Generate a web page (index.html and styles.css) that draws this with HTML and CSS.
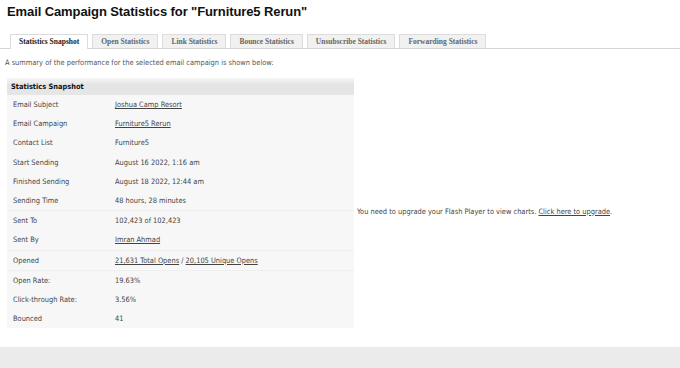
FILE: index.html
```html
<!DOCTYPE html>
<html lang="en">
<head>
  <meta charset="UTF-8" />
  <title>Email Campaign Statistics</title>
  <link rel="stylesheet" href="styles.css">
</head>
<body>
  <div class="page">
    <h1>Email Campaign Statistics for "Furniture5 Rerun"</h1>

    <ul class="tabs">
      <li class="active">Statistics Snapshot</li>
      <li>Open Statistics</li>
      <li>Link Statistics</li>
      <li>Bounce Statistics</li>
      <li>Unsubscribe Statistics</li>
      <li>Forwarding Statistics</li>
    </ul>

    <p class="intro">A summary of the performance for the selected email campaign is shown below:</p>

    <div class="content">
      <table class="snapshot">
        <tr><th colspan="2">Statistics Snapshot</th></tr>
        <tr><td class="label">Email Subject</td><td><a href="#">Joshua Camp Resort</a></td></tr>
        <tr><td class="label">Email Campaign</td><td><a href="#">Furniture5 Rerun</a></td></tr>
        <tr><td class="label">Contact List</td><td>Furniture5</td></tr>
        <tr><td class="label">Start Sending</td><td>August 16 2022, 1:16 am</td></tr>
        <tr><td class="label">Finished Sending</td><td>August 18 2022, 12:44 am</td></tr>
        <tr><td class="label">Sending Time</td><td>48 hours, 28 minutes</td></tr>
        <tr class="line"><td class="label">Sent To</td><td>102,423 of 102,423</td></tr>
        <tr><td class="label">Sent By</td><td><a href="#">Imran Ahmad</a></td></tr>
        <tr class="line"><td class="label">Opened</td><td><a href="#">21,631 Total Opens</a> / <a href="#">20,105 Unique Opens</a></td></tr>
        <tr class="line"><td class="label">Open Rate:</td><td>19.63%</td></tr>
        <tr><td class="label">Click-through Rate:</td><td>3.56%</td></tr>
        <tr><td class="label">Bounced</td><td>41</td></tr>
      </table>

      <div class="chart">
        You need to upgrade your Flash Player to view charts. <a href="#">Click here to upgrade</a>.
      </div>
    </div>
  </div>

  <div class="footer"></div>
</body>
</html>
```

FILE: styles.css
```css
body {
  margin: 0;
  font-family: Tahoma, "DejaVu Sans Condensed", "Liberation Sans", sans-serif;
  font-size: 7.4px;
  color: #444;
  background: #fff;
}

.page {
  height: 347px;
  overflow: hidden;
}

h1 {
  font-family: "Liberation Sans", Arial, sans-serif;
  font-size: 13px;
  font-weight: bold;
  letter-spacing: -0.1px;
  color: #111;
  margin: 0;
  padding: 4px 0 0 7px;
  height: 18px;
}

.tabs {
  list-style: none;
  margin: 12px 0 0 0;
  padding: 0 0 0 10px;
  display: flex;
  gap: 4px;
  border-bottom: 1px solid #d6d6d6;
  height: 14px;
}

.tabs li {
  font-family: "Liberation Serif", serif;
  font-weight: bold;
  font-size: 7.5px;
  color: #666;
  background: #f1f1f1;
  border: 1px solid #dcdcdc;
  border-bottom: none;
  padding: 0 8px;
  line-height: 13px;
}

.tabs li.active {
  background: #fff;
  color: #222;
  height: 14px;
}

.intro {
  margin: 9px 0 0 5px;
  color: #555;
}

.content {
  display: flex;
  align-items: center;
  margin-top: 11px;
}

.snapshot {
  margin-left: 7px;
  width: 347px;
  flex: none;
  border-collapse: collapse;
  background: #f7f7f7;
}

.snapshot th {
  text-align: left;
  font-weight: bold;
  color: #111;
  height: 17px;
  padding: 0 0 0 4px;
  background: linear-gradient(#f6f6f6, #e4e4e4 40%, #e6e6e6);
}

.snapshot td {
  height: 19.2px;
  padding: 0;
  color: #444;
}

.snapshot td.label {
  width: 102px;
  padding-left: 6px;
}

.snapshot tr.line td {
  border-top: 1px solid #efefef;
}

a {
  color: #444;
  text-decoration: underline;
}

.chart {
  margin-left: 3px;
  color: #444;
  margin-top: 16px;
}

.footer {
  height: 21px;
  background: #ebebeb;
}
```
